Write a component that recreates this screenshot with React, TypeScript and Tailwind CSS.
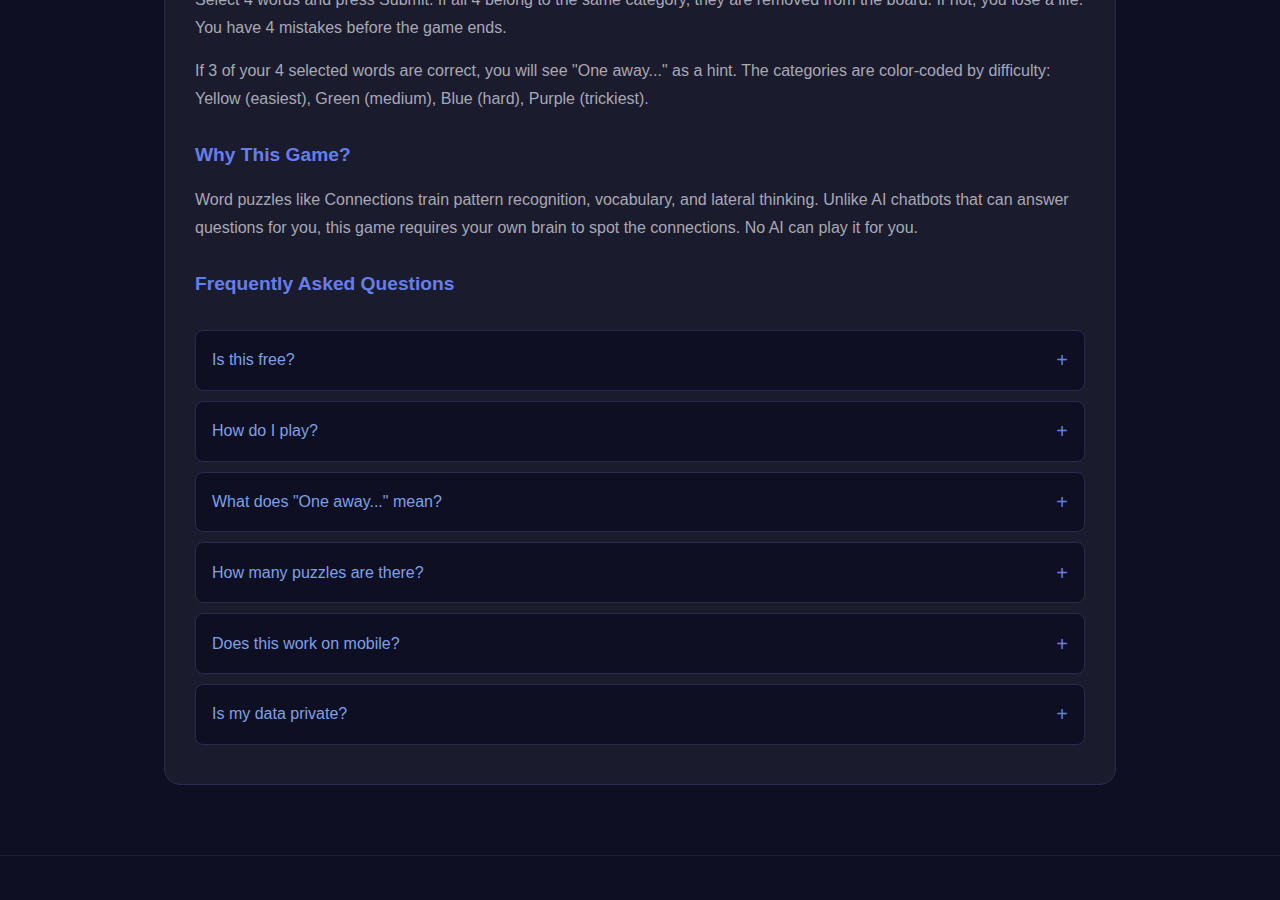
import React from "react";

const faqs = [
  "Is this free?",
  "How do I play?",
  'What does "One away..." mean?',
  "How many puzzles are there?",
  "Does this work on mobile?",
  "Is my data private?",
];

export default function App() {
  return (
    <div
      className="min-h-[900px] bg-[#0e0f22] overflow-hidden"
      style={{ fontFamily: '"Liberation Sans", Arial, sans-serif' }}
    >
      <div className="w-[952px] mx-auto mt-[-88px] rounded-[16px] border border-[#2a2a4c] bg-[#1b1b2e] px-[30px] pt-[30px] pb-[29px]">
        <h2 className="text-[19.2px] leading-[23px] font-bold text-[#667eea] mb-[20px]">
          How to Play
        </h2>
        <p className="text-[16px] leading-[28px] text-[#a8a8b4] mb-[15px]">
          Select 4 words and press Submit. If all 4 belong to the same category, they are removed from the board. If not, you lose a life. You have 4 mistakes before the game ends.
        </p>
        <p className="text-[16px] leading-[28px] text-[#a8a8b4] mb-[15px]">
          If 3 of your 4 selected words are correct, you will see "One away..." as a hint. The categories are color-coded by difficulty: Yellow (easiest), Green (medium), Blue (hard), Purple (trickiest).
        </p>
        <h2 className="text-[19.2px] leading-[23px] font-bold text-[#667eea] mt-[30px] mb-[20px]">
          Why This Game?
        </h2>
        <p className="text-[16px] leading-[28px] text-[#a8a8b4] mb-[15px]">
          Word puzzles like Connections train pattern recognition, vocabulary, and lateral thinking. Unlike AI chatbots that can answer questions for you, this game requires your own brain to spot the connections. No AI can play it for you.
        </p>
        <h2 className="text-[19.2px] leading-[23px] font-bold text-[#667eea] mt-[30px] mb-[35px]">
          Frequently Asked Questions
        </h2>
        <div>
          {faqs.map((q) => (
            <div
              key={q}
              className="h-[60.8px] mb-[10px] flex items-center justify-between rounded-[8px] border border-[#2a2a4c] bg-[#0e0f22] pl-[16px] pr-[16px]"
            >
              <span className="text-[16px] text-[#7fa0e6]">{q}</span>
              <span className="text-[20px] leading-none text-[#667eea]">+</span>
            </div>
          ))}
        </div>
      </div>
      <div className="mt-[70px] border-t border-[#1e1f35] h-[200px]"></div>
    </div>
  );
}
